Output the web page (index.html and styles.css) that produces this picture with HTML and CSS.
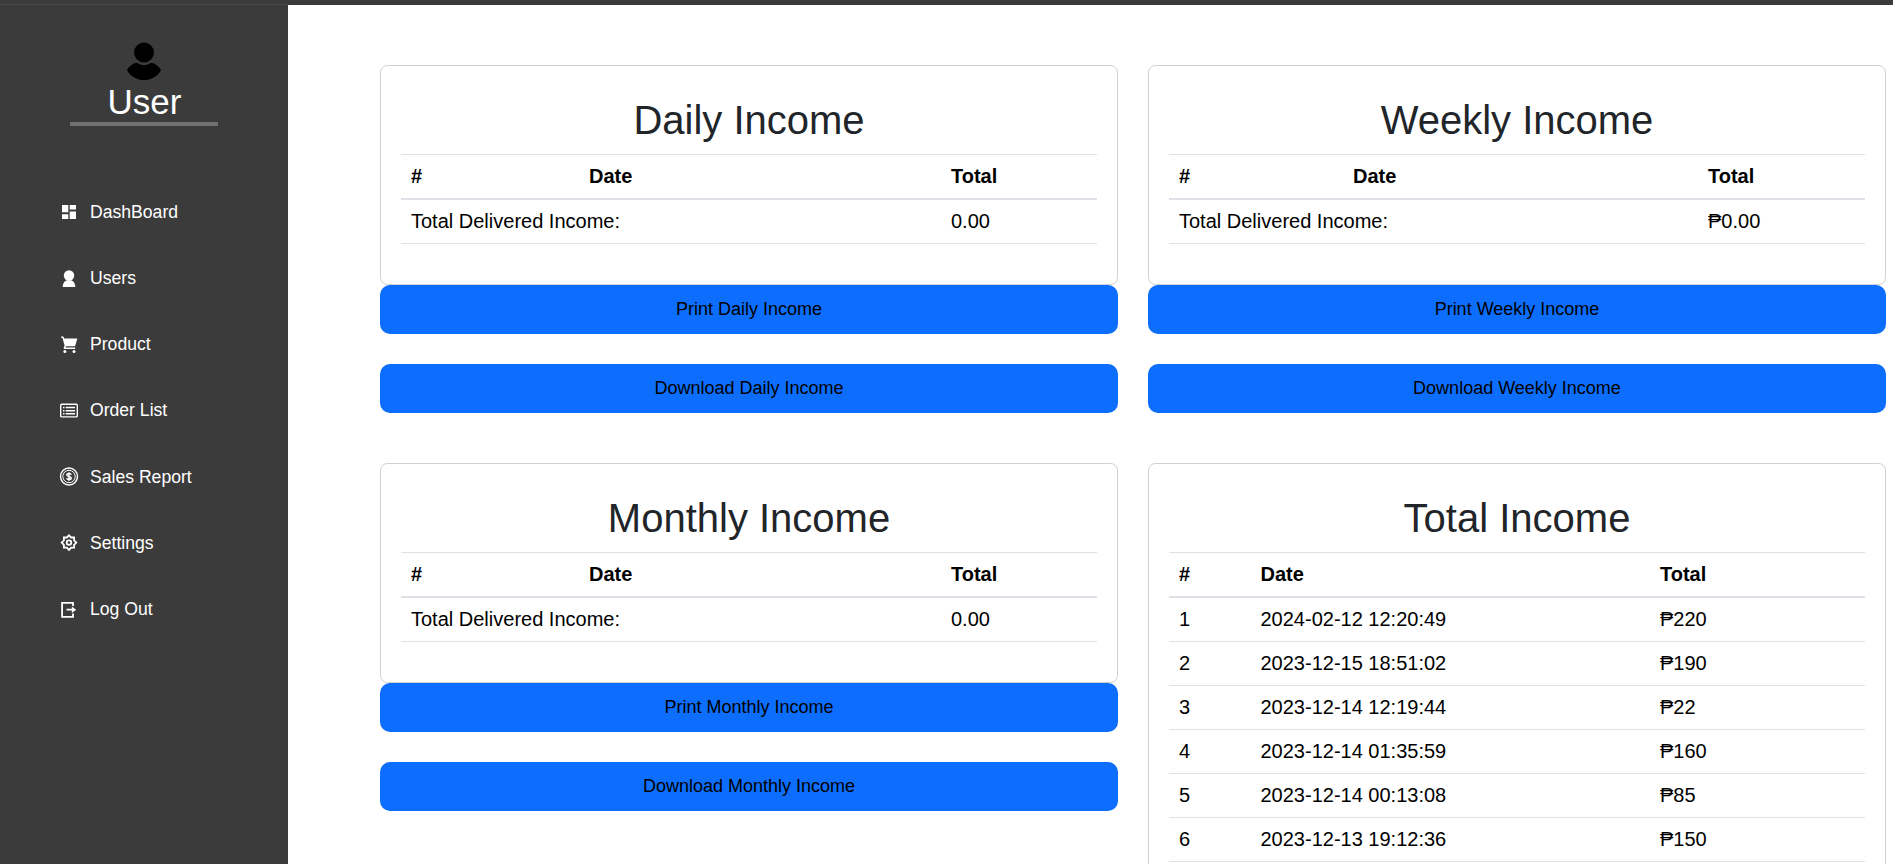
FILE: index.html
```html
<!DOCTYPE html>
<html lang="en">
<head>
<meta charset="utf-8">
<title>Sales Report</title>
<link rel="stylesheet" href="styles.css">
</head>
<body>
<div class="topbar"><div class="topbar-edge"></div></div>
<div class="layout">
  <aside class="sidebar">
    <div class="profile">
      <svg class="avatar" width="36" height="40" viewBox="0 0 36 40"><circle cx="18" cy="11.5" r="10"/><path d="M1 29.2C3 25.500 7 22 11 21.800C13 23.200 15.500 24.100 18 24.100S23 23.200 25 21.800C29 22 33 25.500 35 29.200C31.500 35.500 25 39 18 39S4.500 35.500 1 29.200Z"/></svg>
      <div class="username">User</div>
    </div>
    <nav class="menu">
      <a class="item"><svg class="icon" viewBox="0 0 20 20"><path d="M3 3h6.300v7.300H3zM3 12.300h6.300V17H3zM10.700 3H17v4.400h-6.300zM10.700 9.400H17V17h-6.300z"/></svg>DashBoard</a>
      <a class="item"><svg class="icon" viewBox="0 0 20 20"><circle cx="10" cy="6.500" r="5.200"/><path d="M3.700 18C3.700 14 6 11.700 8 11.300H12C14 11.700 16.300 14 16.300 18Z"/></svg>Users</a>
      <a class="item"><svg class="icon" viewBox="0 0 20 20"><path d="M2 1.400H4.300L5.300 3.400H18.400L16 11.300H7L6.500 12.600H16.200V14H4.800V12.500L5.600 10.800L3.600 3.300L2 2.400Z"/><circle cx="5.900" cy="16.400" r="1.500"/><circle cx="15" cy="16.400" r="1.500"/></svg>Product</a>
      <a class="item"><svg class="icon" viewBox="0 0 20 20"><rect class="line" x="1.700" y="3.300" width="16.600" height="12.600" rx="1"/><path d="M4 5.800h1.500v1.500H4zM6.700 5.800H16v1.500H6.700zM4 8.900h1.500v1.500H4zM6.700 8.900H16v1.500H6.700zM4 12h1.500v1.500H4zM6.700 12H16v1.500H6.700z"/></svg>Order List</a>
      <a class="item"><svg class="icon" viewBox="0 0 20 20"><circle class="line" cx="10" cy="9.500" r="8.500"/><circle class="line thin" cx="10" cy="9.500" r="6.200"/><path class="line" d="M12.300 7.700C12 6.800 11 6.500 10 6.500C8.700 6.500 7.800 7 7.800 7.900C7.800 10 12.300 8.900 12.300 11.100C12.300 12.100 11.300 12.600 10 12.600C8.900 12.600 7.900 12.200 7.600 11.300M10 5.200V13.900"/></svg>Sales Report</a>
      <a class="item"><svg class="icon" viewBox="0 0 20 20"><path class="line thick" d="M10 2.300L12.200 4.500H15.100V7.400L17.300 9.600L15.100 11.800V14.700H12.200L10 16.900L7.800 14.700H4.900V11.800L2.700 9.600L4.900 7.400V4.500H7.800Z"/><circle class="line thick" cx="10" cy="9.600" r="2.300"/></svg>Settings</a>
      <a class="item"><svg class="icon" viewBox="0 0 20 20"><path class="line thick" d="M14 6V2.800H3.100V16.800H14V13.500M7.500 9.700H14"/><path d="M12.800 6.400L17.200 9.700L12.800 13Z"/></svg>Log Out</a>
    </nav>
  </aside>
  <main class="content">
    <section class="report">
      <div class="card">
        <h1>Daily Income</h1>
        <table class="daily">
          <thead><tr><th class="c1">#</th><th class="c2">Date</th><th>Total</th></tr></thead>
          <tbody><tr><td colspan="2">Total Delivered Income:</td><td>0.00</td></tr></tbody>
        </table>
      </div>
      <button>Print Daily Income</button>
      <button>Download Daily Income</button>
    </section>
    <section class="report">
      <div class="card">
        <h1>Weekly Income</h1>
        <table class="weekly">
          <thead><tr><th class="c1">#</th><th class="c2">Date</th><th>Total</th></tr></thead>
          <tbody><tr><td colspan="2">Total Delivered Income:</td><td>₱0.00</td></tr></tbody>
        </table>
      </div>
      <button>Print Weekly Income</button>
      <button>Download Weekly Income</button>
    </section>
    <section class="report">
      <div class="card">
        <h1>Monthly Income</h1>
        <table class="daily">
          <thead><tr><th class="c1">#</th><th class="c2">Date</th><th>Total</th></tr></thead>
          <tbody><tr><td colspan="2">Total Delivered Income:</td><td>0.00</td></tr></tbody>
        </table>
      </div>
      <button>Print Monthly Income</button>
      <button>Download Monthly Income</button>
    </section>
    <section class="report">
      <div class="card">
        <h1>Total Income</h1>
        <table class="total">
          <thead><tr><th class="c1">#</th><th class="c2">Date</th><th>Total</th></tr></thead>
          <tbody>
            <tr><td>1</td><td>2024-02-12 12:20:49</td><td>₱220</td></tr>
            <tr><td>2</td><td>2023-12-15 18:51:02</td><td>₱190</td></tr>
            <tr><td>3</td><td>2023-12-14 12:19:44</td><td>₱22</td></tr>
            <tr><td>4</td><td>2023-12-14 01:35:59</td><td>₱160</td></tr>
            <tr><td>5</td><td>2023-12-14 00:13:08</td><td>₱85</td></tr>
            <tr><td>6</td><td>2023-12-13 19:12:36</td><td>₱150</td></tr>
          </tbody>
        </table>
      </div>
    </section>
  </main>
</div>
</body>
</html>
```

FILE: styles.css
```css
* { box-sizing: border-box; }
body {
  margin: 0;
  height: 864px;
  overflow: hidden;
  background: #fff;
  color: #000;
  font: 20px "Liberation Sans", Arial, sans-serif;
}
.topbar {
  height: 5px;
  padding-top: 4px;
  background: #3b3b3b;
}
.topbar-edge {
  width: 288px;
  height: 1px;
  background: #484848;
}
.layout { display: flex; height: 859px; }
.sidebar {
  flex: none;
  width: 288px;
  background: #3b3b3b;
  color: #fff;
}
.profile {
  display: flex;
  flex-direction: column;
  align-items: center;
  width: 148px;
  height: 121px;
  margin: 0 auto;
  padding-top: 36px;
  border-bottom: 4px solid #707070;
}
.avatar { display: block; flex: none; }
.username {
  padding-left: 1px;
  font-size: 35px;
  line-height: 41px;
}
.menu { padding: 53.300px 0 0 59px; }
.item {
  display: flex;
  align-items: center;
  gap: 11px;
  height: 66.2px;
  font-size: 17.6px;
}
.icon { width: 20px; height: 20px; fill: #fff; }
.line { fill: none; stroke: #fff; stroke-width: 1.4; }
.thin { stroke-width: 1; }
.thick { stroke-width: 1.8; }
.content {
  display: grid;
  grid-template-columns: 738px 738px;
  align-content: start;
  gap: 50px 30px;
  padding: 60px 0 0 92px;
}
.report { display: flex; flex-direction: column; }
.card {
  padding: 20px;
  border: 1px solid #d0d0d0;
  border-radius: 7.500px;
}
h1 {
  margin: 10px 0;
  color: #212529;
  font-size: 40px;
  font-weight: 400;
  line-height: 48px;
  text-align: center;
}
table {
  width: 696px;
  margin-bottom: 20px;
  border-collapse: separate;
  border-spacing: 0;
  table-layout: fixed;
}
th, td {
  height: 44px;
  padding: 10px;
  border-bottom: 1px solid #dee2e6;
  line-height: 23px;
  text-align: left;
}
th {
  height: 46px;
  border-top: 1px solid #dee2e6;
  border-bottom-width: 2px;
}
.daily .c1 { width: 178px; }
.daily .c2 { width: 362px; }
.weekly .c1 { width: 174px; }
.weekly .c2 { width: 355px; }
.total .c1 { width: 81.500px; }
.total .c2 { width: 399.500px; }
button {
  height: 49px;
  padding: 0;
  border: 0;
  border-radius: 10px;
  background: #0d6efd;
  color: #000;
  font: 18px "Liberation Sans", Arial, sans-serif;
}
button + button { margin-top: 30px; }
```
